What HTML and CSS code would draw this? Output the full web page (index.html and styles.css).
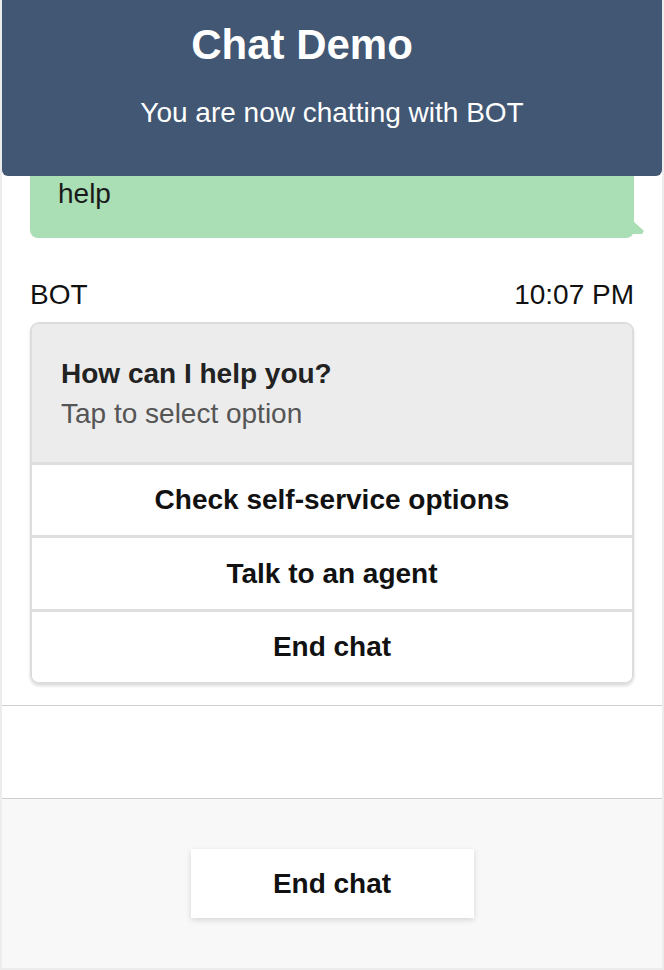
FILE: index.html
```html
<!DOCTYPE html>
<html lang="en">
<head>
<meta charset="utf-8">
<title>Chat Demo</title>
<link rel="stylesheet" href="styles.css">
</head>
<body>
<div class="app">
  <header class="topbar">
    <h1 class="title">Chat Demo</h1>
    <p class="subtitle">You are now chatting with BOT</p>
  </header>
  <main class="messages">
    <div class="bubble user">help</div>
    <div class="meta">
      <span>BOT</span>
      <span>10:07 PM</span>
    </div>
    <div class="card">
      <div class="card-head">
        <div class="card-title">How can I help you?</div>
        <div class="card-sub">Tap to select option</div>
      </div>
      <button class="option">Check self-service options</button>
      <button class="option">Talk to an agent</button>
      <button class="option">End chat</button>
    </div>
  </main>
  <div class="composer"></div>
  <footer class="footer">
    <button class="end-btn">End chat</button>
  </footer>
</div>
</body>
</html>
```
FILE: styles.css
```css
* { box-sizing: border-box; }
html, body {
  margin: 0;
  padding: 0;
  background: #ffffff;
  font-family: "Liberation Sans", Arial, Helvetica, sans-serif;
}
.app {
  position: relative;
  width: 664px;
  height: 970px;
  border: 2px solid #ececec;
  border-top: 0;
  display: flex;
  flex-direction: column;
  background: #fff;
  overflow: hidden;
}
.topbar {
  position: absolute;
  top: 0;
  left: 0;
  right: 0;
  height: 176px;
  background: #415773;
  color: #fff;
  border-radius: 0 0 6px 6px;
  text-align: center;
  padding-top: 21px;
  z-index: 2;
}
.title {
  margin: 0;
  font-size: 42px;
  font-weight: bold;
  line-height: 48px;
  padding-right: 60px;
}
.subtitle {
  margin: 28px 0 0;
  font-size: 28px;
  line-height: 32px;
}
.messages {
  height: 706px;
  flex: none;
  padding: 149px 28px 0;
  display: flex;
  flex-direction: column;
  border-bottom: 1px solid #cfcfcf;
  color: #111;
  font-size: 28px;
}
.bubble {
  position: relative;
  background: #aadeb4;
  border-radius: 8px;
  padding: 29px 28px 28px;
  line-height: 32px;
  color: #1a1a1a;
}
.bubble.user::after {
  content: "";
  position: absolute;
  left: 100%;
  bottom: 4px;
  width: 12px;
  height: 14px;
  margin-left: -2px;
  background: #aadeb4;
  clip-path: polygon(0 0, 100% 78%, 85% 100%, 0 100%);
}
.meta {
  display: flex;
  justify-content: space-between;
  margin-top: 41px;
  line-height: 32px;
  color: #111;
}
.card {
  margin-top: 11px;
  border: 2px solid #dcdcdc;
  border-radius: 9px;
  overflow: hidden;
  box-shadow: 0 2px 3px rgba(0, 0, 0, 0.14);
  display: flex;
  flex-direction: column;
}
.card-head {
  background: #ececec;
  padding: 34px 29px 32px;
}
.card-title {
  font-weight: bold;
  line-height: 32px;
  color: #222;
}
.card-sub {
  margin-top: 8px;
  line-height: 32px;
  color: #555;
}
.option {
  display: block;
  width: 100%;
  height: 73.4px;
  border: 0;
  border-top: 3px solid #dedede;
  background: #fff;
  font-family: inherit;
  font-size: 28px;
  font-weight: bold;
  color: #111;
  padding: 0;
  cursor: pointer;
}
.composer {
  height: 93px;
  flex: none;
  border-bottom: 1px solid #cfcfcf;
  background: #fff;
}
.footer {
  flex: 1;
  background: #f8f8f8;
  display: flex;
  justify-content: center;
  align-items: flex-start;
  padding-top: 50px;
}
.end-btn {
  width: 283px;
  height: 69px;
  border: 0;
  background: #fff;
  box-shadow: 0 2px 6px rgba(0, 0, 0, 0.14);
  font-family: inherit;
  font-size: 28px;
  font-weight: bold;
  color: #111;
  cursor: pointer;
}
```
